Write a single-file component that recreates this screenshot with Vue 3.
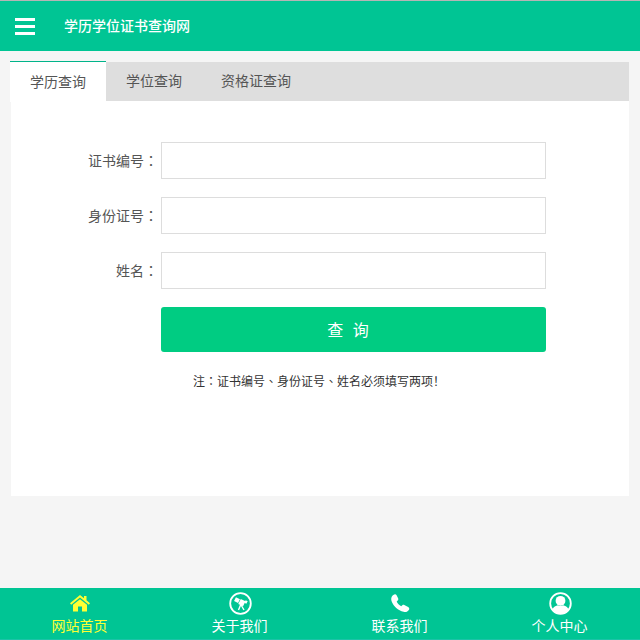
<script setup>
const tabs = ['学历查询', '学位查询', '资格证查询']
const fields = ['证书编号', '身份证号', '姓名']
const navs = [
  { key: 'home', label: '网站首页', active: true },
  { key: 'about', label: '关于我们' },
  { key: 'phone', label: '联系我们' },
  { key: 'user', label: '个人中心' }
]
</script>

<template>
  <div class="page">
    <header class="top">
      <div class="burger"><i></i><i></i><i></i></div>
      <div class="title">学历学位证书查询网</div>
    </header>

    <main class="main">
      <div class="tabs">
        <div v-for="(t, i) in tabs" :key="t" class="tab" :class="{ on: i === 0 }">{{ t }}</div>
      </div>
      <div class="panel">
        <form class="form" @submit.prevent>
          <div v-for="f in fields" :key="f" class="row">
            <label class="label">{{ f }}<span class="punct">：</span></label>
            <input class="input" type="text" />
          </div>
          <div class="row btn-row">
            <span class="label"></span>
            <button class="btn" type="button">查 询</button>
          </div>
          <p class="note">注<span class="punct">：</span>证书编号<span class="punct">、</span>身份证号<span class="punct">、</span>姓名必须填写两项！</p>
        </form>
      </div>
    </main>

    <footer class="nav">
      <div v-for="n in navs" :key="n.key" class="nav-item" :class="{ active: n.active }">
        <span class="ico">
          <svg v-if="n.key === 'home'" width="20" height="17" viewBox="0 0 20 17">
            <path fill="currentColor" d="M10 0 14 3.200V1h2.500V5.300L20 8.300 18.800 9.800 10 2.600 1.200 9.800 0 8.300z" />
            <path fill="currentColor" d="M10 4.200 17 9.800V16.500H12V11.500H8V16.500H3V9.800z" />
          </svg>
          <svg v-else-if="n.key === 'about'" width="23" height="23" viewBox="0 0 23 23">
            <circle cx="11.500" cy="11.500" r="10.300" fill="none" stroke="currentColor" stroke-width="1.800" />
            <path fill="none" stroke="currentColor" stroke-width="4.200" d="M6 7.200 10 9.200" />
            <path fill="none" stroke="currentColor" stroke-width="5.600" d="M10.500 9.400 15.300 11.800" />
            <path fill="none" stroke="currentColor" stroke-width="3" d="M16 9.500 18 10.500" />
            <path fill="none" stroke="currentColor" stroke-width="1.400" d="M11.800 12.500 9.500 18M11.800 12.500 15 18" />
          </svg>
          <svg v-else-if="n.key === 'phone'" width="19" height="19" viewBox="0 0 19 19">
            <path fill="currentColor" d="M2.300.9C3.600-.1 5 0 5.600 1.200L7.100 4.300c.4.900.2 1.600-.4 2.200L5.700 7.500c.9 2 2.400 3.600 4.500 4.800l1.100-1c.6-.5 1.300-.6 2-.3l3.800 1.900c1.300.7 1.500 2 .7 3.100-1.100 1.700-3 2.400-5.200 1.800C7 16.600 2.600 12.300.7 7.500-.3 4.800.3 2.300 2.300.9z" />
          </svg>
          <svg v-else width="23" height="23" viewBox="0 0 23 23">
            <circle cx="11.500" cy="11.500" r="10.300" fill="none" stroke="currentColor" stroke-width="1.800" />
            <circle cx="11.500" cy="8.800" r="4.900" fill="currentColor" />
            <path fill="currentColor" d="M3.400 17.600c.9-2.600 3.500-4 5.600-4.300 1.600.7 3.400.7 5 0 2.100.3 4.700 1.700 5.600 4.300-1.900 2.700-4.800 4.200-8.100 4.200S5.300 20.300 3.400 17.600z" />
          </svg>
        </span>
        <span class="nav-label">{{ n.label }}</span>
      </div>
    </footer>
  </div>
</template>

<style>
html, body { margin: 0; background: #f5f5f5; }
</style>

<style scoped>
.page {
  width: 640px;
  height: 640px;
  display: flex;
  flex-direction: column;
  background: #f5f5f5;
  font-family: "Noto Sans CJK SC", "Liberation Sans", sans-serif;
  font-size: 14px;
  overflow: hidden;
}
.punct { font-family: "Noto Sans CJK TC", sans-serif; }
.top {
  box-sizing: border-box;
  height: 51px;
  padding-bottom: 2px;
  border-top: 1px solid #b5b5b5;
  background: #00c594;
  display: flex;
  align-items: center;
  color: #fff;
  flex: none;
}
.burger {
  width: 20px;
  margin-left: 15px;
  display: flex;
  flex-direction: column;
  gap: 4px;
  position: relative;
  top: 1px;
}
.burger i { display: block; height: 3px; background: #fff; }
.title { margin-left: 30px; font-weight: 500; font-size: 14px; text-indent: -1px; }
.main { margin: 10px 11px 0 10px; flex: none; }
.tabs {
  display: flex;
  height: 39px;
  margin-top: 1px;
  background: #dedede;
}
.tab {
  padding: 0 20px;
  line-height: 37px;
  color: #555;
}
.tab:last-child { margin-left: -1px; }
.tab.on {
  width: 56px;
  margin-top: -1px;
  height: 40px;
  background: #fff;
  border-top: 1px solid #00b48a;
  box-sizing: content-box;
  line-height: 38px;
}
.panel {
  box-sizing: border-box;
  height: 395px;
  margin-left: 1px;
  background: #fff;
  padding-top: 41px;
}
.form { display: flex; flex-direction: column; }
.row {
  display: flex;
  align-items: center;
  height: 37px;
  margin-bottom: 18px;
}
.label {
  width: 147px;
  margin-right: 3px;
  padding-bottom: 2px;
  text-align: right;
  color: #555;
  flex: none;
}
.input {
  box-sizing: border-box;
  width: 385px;
  height: 37px;
  border: 1px solid #ddd;
  background: #fff;
  outline: none;
  margin: 0;
}
.btn-row { height: 45px; margin-bottom: 0; }
.btn {
  width: 385px;
  height: 45px;
  padding: 0 8px 2px 0;
  border: 0;
  border-radius: 3px;
  background: #00cc82;
  color: #fff;
  font: inherit;
  font-size: 16px;
  letter-spacing: 3px;
}
.note {
  margin: 20px 0 0 182px;
  font-size: 12px;
  line-height: 18px;
  color: #333;
}
.nav {
  margin-top: auto;
  box-sizing: border-box;
  height: 52px;
  border-bottom: 1px solid #1cc3a8;
  background: #00c594;
  display: grid;
  grid-template-columns: repeat(4, 1fr);
  flex: none;
}
.nav-item {
  display: flex;
  flex-direction: column;
  align-items: center;
  color: #fff;
}
.nav-item.active { color: #ffff33; }
.ico {
  height: 30px;
  display: flex;
  align-items: center;
  justify-content: center;
}
.nav-label { font-size: 14px; line-height: 14px; position: relative; left: -0.5px; }
</style>
